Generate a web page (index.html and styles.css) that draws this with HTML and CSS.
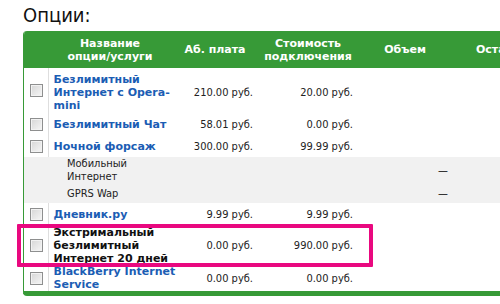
FILE: index.html
```html
<!DOCTYPE html>
<html lang="ru">
<head>
<meta charset="utf-8">
<title>Опции</title>
<link rel="stylesheet" href="styles.css">
</head>
<body>
<div class="page">
  <h2 class="title">Опции:</h2>
  <div class="grid-wrap">
    <table class="grid">
      <colgroup>
        <col class="c-check"><col class="c-name"><col class="c-fee"><col class="c-cost"><col class="c-vol"><col class="c-rest">
      </colgroup>
      <thead>
        <tr>
          <th></th>
          <th>Название<br>опции/услуги</th>
          <th>Аб. плата</th>
          <th>Стоимость<br>подключения</th>
          <th>Объем</th>
          <th class="rest">Остаток</th>
        </tr>
      </thead>
      <tbody>
        <tr class="first">
          <td class="chk"><span class="box"></span></td>
          <td class="name"><a href="#">Безлимитный<br>Интернет с Opera-<br>mini</a></td>
          <td class="num">210.00 руб.</td>
          <td class="num">20.00 руб.</td>
          <td></td><td></td>
        </tr>
        <tr class="r-std">
          <td class="chk"><span class="box"></span></td>
          <td class="name"><a href="#">Безлимитный Чат</a></td>
          <td class="num">58.01 руб.</td>
          <td class="num">0.00 руб.</td>
          <td></td><td></td>
        </tr>
        <tr class="r-std">
          <td class="chk"><span class="box"></span></td>
          <td class="name"><a href="#">Ночной форсаж</a></td>
          <td class="num">300.00 руб.</td>
          <td class="num">99.99 руб.</td>
          <td></td><td></td>
        </tr>
        <tr class="sub sub1">
          <td></td>
          <td class="subname">Мобильный<br>Интернет</td>
          <td></td><td></td>
          <td class="num dash">—</td><td></td>
        </tr>
        <tr class="sub sub2">
          <td></td>
          <td class="subname">GPRS Wap</td>
          <td></td><td></td>
          <td class="num dash">—</td><td></td>
        </tr>
        <tr class="r-diary">
          <td class="chk"><span class="box"></span></td>
          <td class="name"><a href="#">Дневник.ру</a></td>
          <td class="num">9.99 руб.</td>
          <td class="num">9.99 руб.</td>
          <td></td><td></td>
        </tr>
        <tr class="r-ext">
          <td class="chk"><span class="box"></span></td>
          <td class="name plain">Экстримальный<br>безлимитный<br>Интернет 20 дней</td>
          <td class="num">0.00 руб.</td>
          <td class="num">990.00 руб.</td>
          <td></td><td></td>
        </tr>
        <tr class="r-bb">
          <td class="chk"><span class="box"></span></td>
          <td class="name"><a href="#">BlackBerry Internet<br>Service</a></td>
          <td class="num">0.00 руб.</td>
          <td class="num">0.00 руб.</td>
          <td></td><td></td>
        </tr>
      </tbody>
    </table>
  </div>
  <div class="highlight"></div>
</div>
</body>
</html>
```
FILE: styles.css
```css
html, body {
  margin: 0;
  padding: 0;
  background: #ffffff;
  overflow: hidden;
}
body {
  width: 500px;
  height: 304px;
  font-family: "DejaVu Sans Condensed", "DejaVu Sans", sans-serif;
  font-size: 11px;
  color: #222222;
}
.page {
  position: relative;
  width: 500px;
  height: 304px;
  overflow: hidden;
}
.title {
  margin: 0;
  padding: 3px 0 0 23px;
  height: 28px;
  font-size: 20px;
  line-height: 24px;
  font-weight: normal;
  color: #111111;
}
.grid-wrap {
  margin-left: 23px;
  width: 620px;
  border-left: 1px solid #379a37;
  border-bottom: 5px solid #379a37;
  border-radius: 4px 0 0 4px;
  overflow: hidden;
}
.grid {
  border-collapse: collapse;
  table-layout: fixed;
  width: 619px;
}
.c-check { width: 24px; }
.c-name { width: 124px; }
.c-fee { width: 86px; }
.c-cost { width: 100px; }
.c-vol { width: 94px; }
.c-rest { width: 191px; }
.grid th {
  box-sizing: border-box;
  background: #379a37;
  color: #ffffff;
  font-family: "DejaVu Sans", sans-serif;
  font-weight: bold;
  line-height: 13px;
  height: 37px;
  padding: 0;
  text-align: center;
  vertical-align: middle;
  white-space: nowrap;
}
.grid th.rest {
  text-align: left;
  padding-left: 24px;
}
.grid td {
  box-sizing: border-box;
  padding: 0;
  line-height: 13px;
  vertical-align: middle;
  white-space: nowrap;
}
.grid td.chk {
  border-right: 1px solid #dedede;
  text-align: center;
  padding-left: 1px;
}
.box {
  display: inline-block;
  width: 11px;
  height: 11px;
  border: 1px solid #8e8f8f;
  background: linear-gradient(135deg, #d6d6d6, #f6f6f6);
  box-shadow: inset 0 0 0 1px #f2f2f2;
  vertical-align: middle;
}
.grid td.name {
  padding-left: 5px;
  font-family: "DejaVu Sans", sans-serif;
  font-weight: bold;
}
.name a {
  color: #1b5db4;
  text-decoration: none;
}
.name.plain {
  color: #111111;
}
.grid td.num {
  text-align: right;
  padding-right: 5px;
  color: #222222;
}
.grid tr.first td {
  height: 45px;
  padding-top: 5px;
  padding-bottom: 1px;
}
.grid tr.first td.chk { padding-top: 0; padding-bottom: 0; }
.grid tr.r-std td { height: 22px; }
.grid tr.sub td {
  background: #f1f1f1;
}
.grid tr.sub1 td { height: 26px; }
.grid tr.sub2 td { height: 20px; }
.grid td.subname {
  padding-left: 19px;
  color: #222222;
}
.grid td.dash {
  color: #000000;
  padding-right: 4px;
}
.grid tr.r-diary td { height: 23px; }
.grid tr.r-ext td { height: 39px; }
.grid tr.r-bb td { height: 26px; }
.highlight {
  position: absolute;
  left: 17px;
  top: 224px;
  width: 348px;
  height: 35px;
  border: 4px solid #e9087f;
  border-radius: 1px;
}
```
